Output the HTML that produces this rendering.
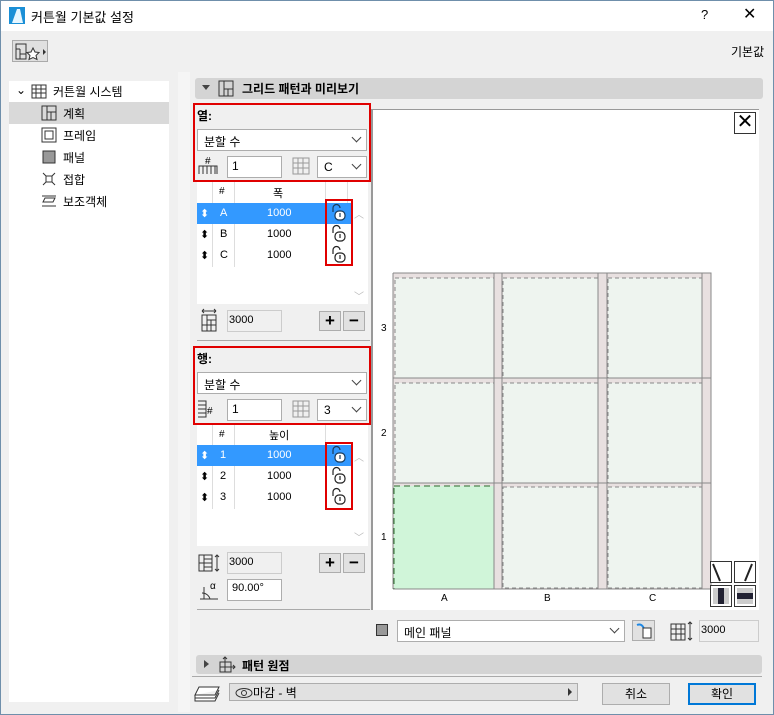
<!DOCTYPE html>
<html><head><meta charset="utf-8"><style>
*{box-sizing:border-box;margin:0;padding:0}
body{width:774px;height:715px;overflow:hidden;background:#f0f0f0;font-family:"Liberation Sans","Noto Sans CJK KR",sans-serif;font-size:12px;color:#000;position:relative}
.a{position:absolute}
.in{position:absolute;background:#fff;border:1px solid #adadad;font-size:12px;padding:2px 4px}
.dd{position:absolute;background:#fff;border:1px solid #adadad;font-size:12px;padding:3px 6px}
.chev{position:absolute;right:6px;top:4px;width:7px;height:7px;border-right:1px solid #444;border-bottom:1px solid #444;transform:rotate(45deg)}
.ro{position:absolute;background:#f0f0f0;border:1px solid #ccc;font-size:11px;padding:3px 1px}
.btn{position:absolute;background:#e1e1e1;border:1px solid #adadad;text-align:center}
.red{position:absolute;border:2px solid #e00000}
.row{position:absolute;left:0;width:156px;height:21px;font-size:11px}
.row span{position:absolute;top:4px}
.sel{background:#3399ff;color:#fff}
</style></head><body>
<div class="a" style="left:0;top:0;width:774px;height:715px;border:1px solid #6f8fab"></div>
<div class="a" style="left:1px;top:1px;width:772px;height:30px;background:#fff"></div>
<svg class="a" style="left:9px;top:7px" width="16" height="17"><rect width="16" height="17" fill="#1a8fd6"/><path d="M3 16 L8 2 L11 2 L14 16 Z" fill="#e6f6ff"/></svg>
<div class="a" style="left:31px;top:7px;font-size:13px">커튼월 기본값 설정</div>
<div class="a" style="left:701px;top:7px;font-size:13px">?</div>
<div class="a" style="left:743px;top:4px;font-size:16px">✕</div>
<div class="a" style="left:12px;top:40px;width:36px;height:22px;background:#e0e0e0;border:1px solid #aaa"></div>
<svg class="a" style="left:14px;top:42px" width="34" height="20"><path d="M2 2h10v15H2zM2 7h4M6 7v10M6 12h6" fill="none" stroke="#333"/><path d="M19 6l2 4 4 .5-3 3 1 4-4-2-4 2 1-4-3-3 4-.5z" fill="#fff" stroke="#333"/><path d="M29 7l3 3-3 3z" fill="#333"/></svg>
<div class="a" style="left:731px;top:43px;font-size:12px">기본값</div>
<div class="a" style="left:9px;top:81px;width:160px;height:621px;background:#fff"></div>
<div class="a" style="left:9px;top:102px;width:160px;height:22px;background:#d9d9d9"></div>
<div class="a" style="left:16px;top:83px;font-size:12px">⌄</div>
<svg class="a" style="left:31px;top:83px" width="16" height="16"><path d="M1 2h14v13H1zM1 6h14M1 10h14M5 2v13M10 2v13" fill="none" stroke="#333"/></svg>
<div class="a" style="left:53px;top:83px">커튼월 시스템</div>
<svg class="a" style="left:41px;top:105px" width="16" height="16"><path d="M1 1h14v14H1zM6 1v14M6 7h9M10 7v8" fill="none" stroke="#333"/></svg>
<div class="a" style="left:63px;top:105px">계획</div>
<svg class="a" style="left:41px;top:127px" width="16" height="16"><path d="M1 1h14v14H1zM4 4h8v8H4z" fill="none" stroke="#333"/></svg>
<div class="a" style="left:63px;top:127px">프레임</div>
<svg class="a" style="left:41px;top:149px" width="16" height="16"><rect x="2" y="2" width="12" height="12" fill="#999" stroke="#333"/></svg>
<div class="a" style="left:63px;top:149px">패널</div>
<svg class="a" style="left:41px;top:171px" width="16" height="16"><path d="M2 2l12 12M14 2L2 14" stroke="#333"/><rect x="5" y="5" width="6" height="6" fill="#fff" stroke="#333"/></svg>
<div class="a" style="left:63px;top:171px">접합</div>
<svg class="a" style="left:41px;top:193px" width="16" height="16"><path d="M1 3h14M4 5h10L12 9H2zM1 13h14" fill="none" stroke="#333"/></svg>
<div class="a" style="left:63px;top:193px">보조객체</div>
<div class="a" style="left:178px;top:72px;width:12px;height:640px;background:#f5f5f5"></div>
<div class="a" style="left:195px;top:78px;width:568px;height:21px;background:#d4d4d4;border-radius:3px"></div>
<div class="a" style="left:202px;top:85px;border-left:4px solid transparent;border-right:4px solid transparent;border-top:5px solid #444"></div>
<svg class="a" style="left:218px;top:80px" width="16" height="17"><path d="M1 1h14v15H1zM6 1v15M6 9h9M10 9v7" fill="none" stroke="#333"/></svg>
<div class="a" style="left:242px;top:80px;font-weight:bold">그리드 패턴과 미리보기</div>
<div class="a" style="left:197px;top:107px;font-weight:bold">열:</div>
<div class="dd" style="left:197px;top:129px;width:170px;height:22px">분할 수<div class="chev"></div></div>
<svg class="a" style="left:198px;top:155px" width="20" height="20"><path d="M1 19V11h18v8M5 11v8M9 11v8M13 11v8M17 11v8" fill="none" stroke="#333"/><text x="7" y="9" font-size="10" font-family="Liberation Sans">#</text></svg>
<div class="in" style="left:227px;top:156px;width:55px;height:22px">1</div>
<svg class="a" style="left:291px;top:156px" width="20" height="20"><path d="M2 2h16v16H2zM2 7h16M2 12h16M7 2v16M12 2v16" fill="none" stroke="#999"/></svg>
<div class="dd" style="left:317px;top:156px;width:50px;height:22px">C<div class="chev"></div></div>
<div class="red" style="left:193px;top:103px;width:178px;height:79px"></div>
<div class="a" style="left:197px;top:182px;width:171px;height:122px;background:#fff">
 <div class="a" style="left:15px;top:0;width:1px;height:85px;background:#ddd"></div>
 <div class="a" style="left:37px;top:0;width:1px;height:85px;background:#ddd"></div>
 <div class="a" style="left:128px;top:0;width:1px;height:22px;background:#ddd"></div>
 <div class="a" style="left:150px;top:0;width:1px;height:22px;background:#ddd"></div>
 <div class="a" style="left:22px;top:4px;font-size:10px">#</div>
 <div class="a" style="left:76px;top:3px;font-size:11px">폭</div>
 <div class="row sel" style="top:21px"><span style="left:3px">⬍</span><span style="left:23px">A</span><span style="left:70px">1000</span></div>
 <div class="row" style="top:42px"><span style="left:3px">⬍</span><span style="left:23px">B</span><span style="left:70px">1000</span></div>
 <div class="row" style="top:63px"><span style="left:3px">⬍</span><span style="left:23px">C</span><span style="left:70px">1000</span></div>
 <div class="a" style="left:157px;top:24px;color:#bbb;font-size:10px">︿</div>
 <div class="a" style="left:157px;top:106px;color:#bbb;font-size:10px">﹀</div>
</div>
<svg class="a" style="left:330px;top:203px" width="18" height="62"><g fill="none" stroke="#1a3a5a" stroke-width="1.2"><path d="M3 9V5a3.5 3.5 0 0 1 7 0"/><rect x="5" y="8" width="10" height="9" rx="4" fill="#fff"/><path d="M10 10v4"/></g><g transform="translate(0,21)" fill="none" stroke="#222" stroke-width="1.2"><path d="M3 9V5a3.5 3.5 0 0 1 7 0"/><rect x="5" y="8" width="10" height="9" rx="4"/><path d="M10 10v4"/></g><g transform="translate(0,42)" fill="none" stroke="#222" stroke-width="1.2"><path d="M3 9V5a3.5 3.5 0 0 1 7 0"/><rect x="5" y="8" width="10" height="9" rx="4"/><path d="M10 10v4"/></g></svg>
<div class="red" style="left:325px;top:199px;width:28px;height:67px"></div>
<svg class="a" style="left:199px;top:308px" width="20" height="24"><path d="M3 3h14M3 3l2-2M3 3l2 2M17 3l-2-2M17 3l-2 2M3 7h14v16H3zM8 12h9M8 7v16M12 12v11M3 17h14" fill="none" stroke="#333"/></svg>
<div class="ro" style="left:227px;top:310px;width:55px;height:22px">3000</div>
<div class="btn" style="left:319px;top:311px;width:22px;height:20px;font-size:17px;font-weight:bold;line-height:17px">+</div>
<div class="btn" style="left:343px;top:311px;width:22px;height:20px;font-size:17px;font-weight:bold;line-height:17px">−</div>
<div class="a" style="left:197px;top:340px;width:173px;height:1px;background:#aaa"></div>
<div class="a" style="left:197px;top:350px;font-weight:bold">행:</div>
<div class="dd" style="left:197px;top:372px;width:170px;height:22px">분할 수<div class="chev"></div></div>
<svg class="a" style="left:197px;top:399px" width="22" height="20"><path d="M1 2h8v16H1M1 6h8M1 10h8M1 14h8" fill="none" stroke="#333"/><text x="10" y="15" font-size="10" font-family="Liberation Sans">#</text></svg>
<div class="in" style="left:227px;top:399px;width:55px;height:22px">1</div>
<svg class="a" style="left:291px;top:399px" width="20" height="20"><path d="M2 2h16v16H2zM2 7h16M2 12h16M7 2v16M12 2v16" fill="none" stroke="#999"/></svg>
<div class="dd" style="left:317px;top:399px;width:50px;height:22px">3<div class="chev"></div></div>
<div class="red" style="left:193px;top:346px;width:178px;height:79px"></div>
<div class="a" style="left:197px;top:425px;width:171px;height:121px;background:#fff">
 <div class="a" style="left:15px;top:0;width:1px;height:84px;background:#ddd"></div>
 <div class="a" style="left:37px;top:0;width:1px;height:84px;background:#ddd"></div>
 <div class="a" style="left:128px;top:0;width:1px;height:20px;background:#ddd"></div>
 <div class="a" style="left:22px;top:4px;font-size:10px">#</div>
 <div class="a" style="left:72px;top:2px;font-size:11px">높이</div>
 <div class="row sel" style="top:20px"><span style="left:3px">⬍</span><span style="left:23px">1</span><span style="left:70px">1000</span></div>
 <div class="row" style="top:41px"><span style="left:3px">⬍</span><span style="left:23px">2</span><span style="left:70px">1000</span></div>
 <div class="row" style="top:62px"><span style="left:3px">⬍</span><span style="left:23px">3</span><span style="left:70px">1000</span></div>
 <div class="a" style="left:157px;top:24px;color:#bbb;font-size:10px">︿</div>
 <div class="a" style="left:157px;top:104px;color:#bbb;font-size:10px">﹀</div>
</div>
<svg class="a" style="left:330px;top:445px" width="18" height="62"><g fill="none" stroke="#1a3a5a" stroke-width="1.2"><path d="M3 9V5a3.5 3.5 0 0 1 7 0"/><rect x="5" y="8" width="10" height="9" rx="4" fill="#fff"/><path d="M10 10v4"/></g><g transform="translate(0,21)" fill="none" stroke="#222" stroke-width="1.2"><path d="M3 9V5a3.5 3.5 0 0 1 7 0"/><rect x="5" y="8" width="10" height="9" rx="4"/><path d="M10 10v4"/></g><g transform="translate(0,42)" fill="none" stroke="#222" stroke-width="1.2"><path d="M3 9V5a3.5 3.5 0 0 1 7 0"/><rect x="5" y="8" width="10" height="9" rx="4"/><path d="M10 10v4"/></g></svg>
<div class="red" style="left:325px;top:442px;width:28px;height:68px"></div>
<svg class="a" style="left:198px;top:553px" width="22" height="20"><path d="M1 2h13v16H1zM1 10h13M6 2v16M6 6h8M6 14h8M19 2v16M17 4l2-2 2 2M17 16l2 2 2-2" fill="none" stroke="#333"/></svg>
<div class="ro" style="left:227px;top:552px;width:55px;height:22px">3000</div>
<div class="btn" style="left:319px;top:553px;width:22px;height:20px;font-size:17px;font-weight:bold;line-height:17px">+</div>
<div class="btn" style="left:343px;top:553px;width:22px;height:20px;font-size:17px;font-weight:bold;line-height:17px">−</div>
<svg class="a" style="left:198px;top:579px" width="22" height="22"><path d="M2 20h18M6 20V8M4 14a8 8 0 0 1 8 6" fill="none" stroke="#333"/><text x="12" y="10" font-size="10" font-family="Liberation Sans">α</text></svg>
<div class="in" style="left:227px;top:579px;width:55px;height:22px;font-size:11px">90.00°</div>
<div class="a" style="left:197px;top:609px;width:173px;height:1px;background:#aaa"></div>
<div class="a" style="left:371px;top:109px;width:388px;height:501px;background:#fff;border-left:2px solid #999;border-top:1px solid #999"></div>
<div class="a" style="left:734px;top:112px;width:22px;height:22px;border:1px solid #333;background:#fff;font-size:20px;line-height:19px;text-align:center">✕</div>
<svg class="a" style="left:372px;top:270px" width="345" height="335">
 <rect x="21" y="3" width="318" height="316" fill="#e8e0e0"/>
 <g fill="#eef4ef" stroke="#888" stroke-dasharray="4 3">
  <rect x="23" y="8" width="99" height="100"/><rect x="131" y="8" width="96" height="100"/><rect x="236" y="8" width="95" height="100"/>
  <rect x="23" y="113" width="99" height="100"/><rect x="131" y="113" width="96" height="100"/><rect x="236" y="113" width="95" height="100"/>
  <rect x="131" y="217" width="96" height="101"/><rect x="236" y="217" width="95" height="101"/>
 </g>
 <rect x="22" y="216" width="101" height="103" fill="#d0f5d9" stroke="#2a6a2a" stroke-dasharray="6 4"/>
 <g fill="#e8e0e0" stroke="#888"><rect x="122" y="3" width="8" height="316"/><rect x="226" y="3" width="9" height="316"/><rect x="330" y="3" width="9" height="316"/></g>
 <g stroke="#888" fill="none"><path d="M21 3h318M21 108h318M21 213h318M21 319h318M21 3v316"/></g>
 <text x="9" y="61" font-size="10" font-family="Liberation Sans">3</text>
 <text x="9" y="166" font-size="10" font-family="Liberation Sans">2</text>
 <text x="9" y="270" font-size="10" font-family="Liberation Sans">1</text>
 <text x="69" y="331" font-size="10" font-family="Liberation Sans">A</text>
 <text x="172" y="331" font-size="10" font-family="Liberation Sans">B</text>
 <text x="277" y="331" font-size="10" font-family="Liberation Sans">C</text>
</svg>
<svg class="a" style="left:710px;top:561px" width="48" height="46"><g stroke="#333" fill="#fff"><rect x="0.5" y="0.5" width="21" height="21"/><rect x="24.5" y="0.5" width="21" height="21"/><rect x="0.5" y="24.5" width="21" height="21"/><rect x="24.5" y="24.5" width="21" height="21"/></g><path d="M3 3l7 17M42 3l-7 17" stroke="#222" stroke-width="2"/><g fill="#ccc"><rect x="3" y="27" width="16" height="16"/><rect x="27" y="27" width="16" height="16"/></g><g fill="#223"><rect x="8" y="27" width="6" height="16"/><rect x="27" y="32" width="16" height="6"/></g></svg>
<svg class="a" style="left:375px;top:623px" width="14" height="14"><rect x="1.5" y="1.5" width="11" height="11" fill="#999" stroke="#333"/></svg>
<div class="dd" style="left:397px;top:620px;width:228px;height:22px">메인 패널<div class="chev"></div></div>
<div class="btn" style="left:632px;top:620px;width:23px;height:21px"></div>
<svg class="a" style="left:635px;top:622px" width="18" height="18"><path d="M2 3q5-2 7 4" stroke="#1e88e5" stroke-width="2" fill="none"/><rect x="8" y="6" width="8" height="10" fill="#fff" stroke="#333"/></svg>
<svg class="a" style="left:670px;top:620px" width="24" height="22"><path d="M1 4h14v16H1zM1 9h14M1 14h14M6 4v16M11 4v16M20 2v18M18 4l2-2 2 2M18 18l2 2 2-2" fill="none" stroke="#333"/></svg>
<div class="ro" style="left:699px;top:620px;width:60px;height:22px">3000</div>
<div class="a" style="left:196px;top:655px;width:566px;height:19px;background:#d4d4d4;border-radius:3px"></div>
<div class="a" style="left:204px;top:660px;border-top:4px solid transparent;border-bottom:4px solid transparent;border-left:5px solid #444"></div>
<svg class="a" style="left:218px;top:656px" width="18" height="17"><path d="M2 6h11v10H2zM7 6v10M2 11h11M7 1v5M5 3l2-2 2 2M13 11h4M15 9l2 2-2 2" fill="none" stroke="#333"/></svg>
<div class="a" style="left:242px;top:657px;font-weight:bold">패턴 원점</div>
<div class="a" style="left:192px;top:676px;width:570px;height:1px;background:#aaa"></div>
<svg class="a" style="left:194px;top:684px" width="26" height="18"><path d="M5 3h20l-4 8H1z M1 11v3h20l4-8M1 14v3h20l4-8" fill="#fff" stroke="#333"/></svg>
<div class="a" style="left:229px;top:683px;width:349px;height:18px;background:#e1e1e1;border:1px solid #adadad"></div>
<svg class="a" style="left:235px;top:687px" width="18" height="12"><ellipse cx="9" cy="6" rx="8" ry="4.5" fill="none" stroke="#333"/><circle cx="9" cy="6" r="2.5" fill="none" stroke="#333"/></svg>
<div class="a" style="left:253px;top:684px;font-size:12px">마감 - 벽</div>
<div class="a" style="left:568px;top:688px;border-top:4px solid transparent;border-bottom:4px solid transparent;border-left:4px solid #333"></div>
<div class="btn" style="left:602px;top:683px;width:68px;height:22px;line-height:20px">취소</div>
<div class="btn" style="left:688px;top:683px;width:68px;height:22px;line-height:18px;border:2px solid #0078d7">확인</div>
</body></html>
